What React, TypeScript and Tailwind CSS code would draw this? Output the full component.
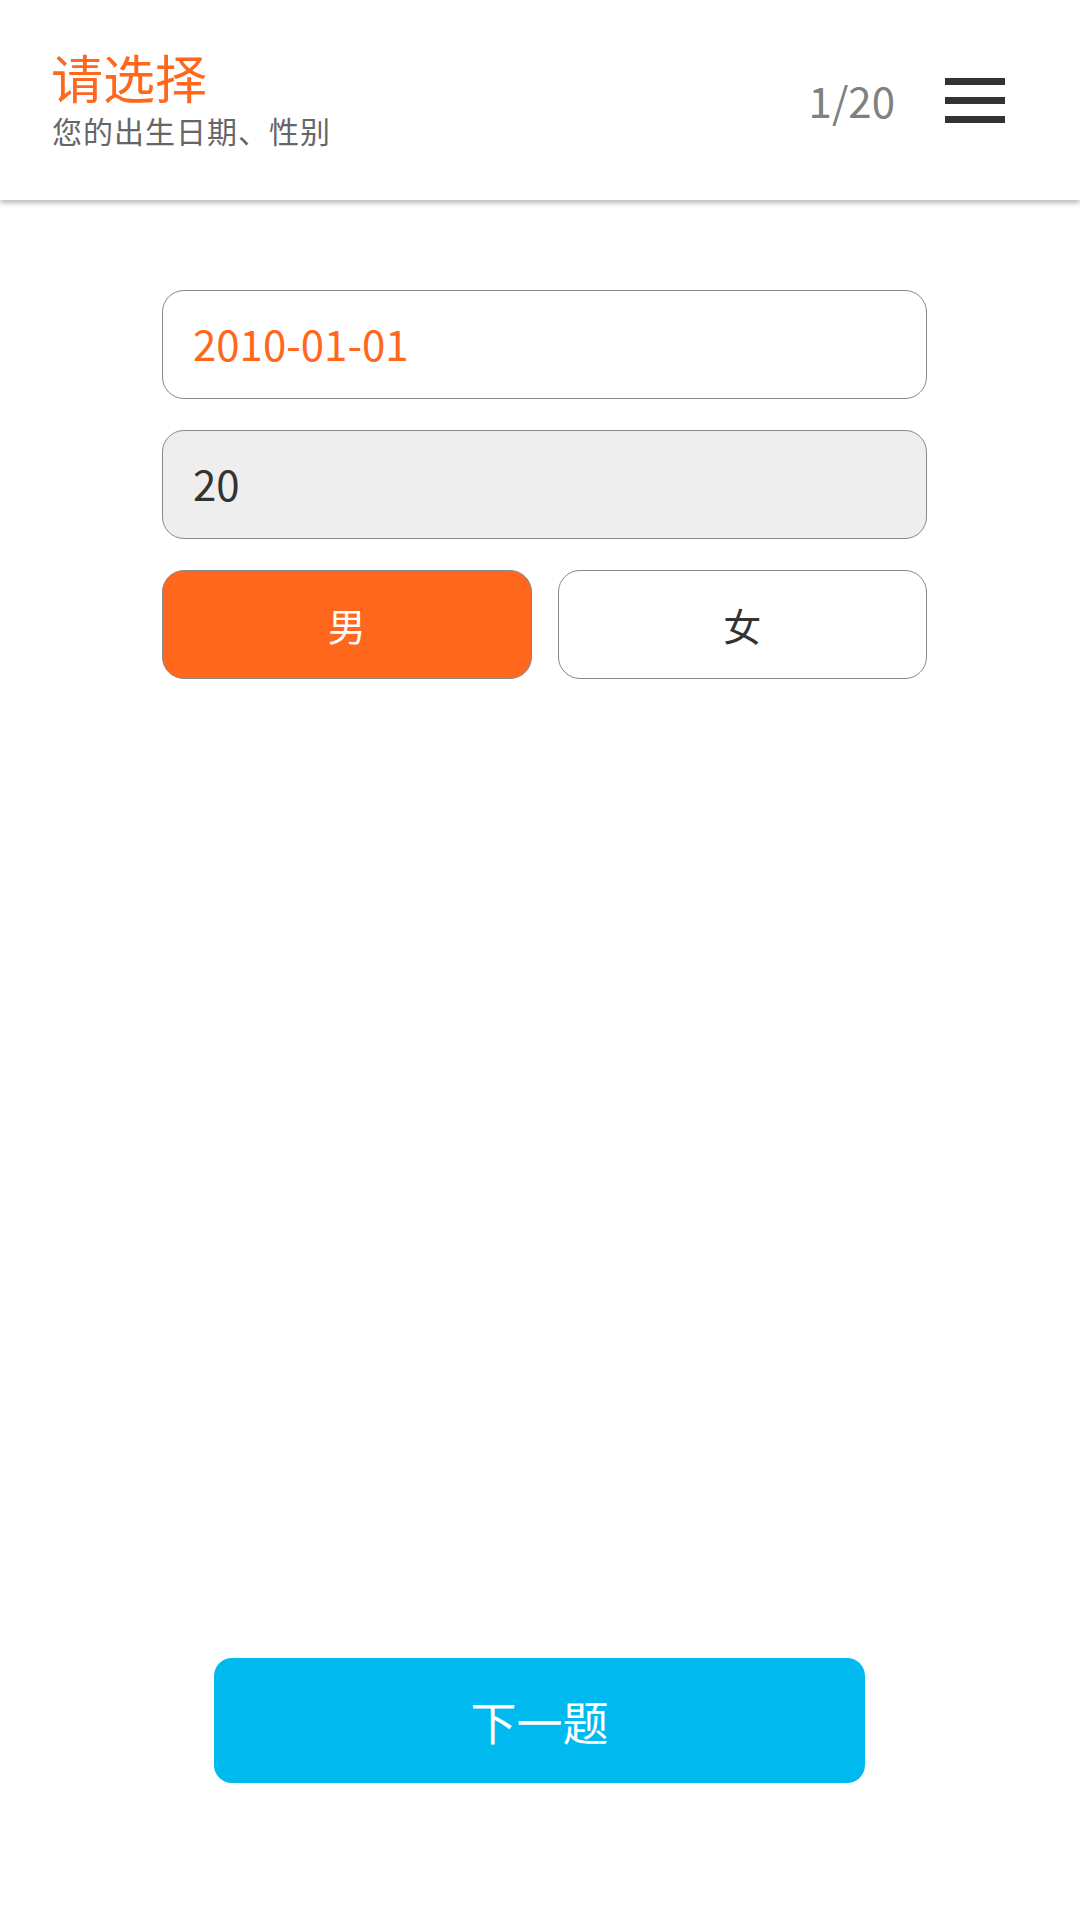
import React, { useState } from "react";

const ORANGE = "text-[#ff671d]";

function Header() {
	return (
		<header className="relative z-10 flex h-[200px] shrink-0 items-center justify-between bg-white pl-[51px] pr-[75px] shadow-[0_3px_5px_rgba(0,0,0,0.28)]">
			<div className="-mt-[4px] flex flex-col">
				<h1 className={`text-[52px] leading-[56px] ${ORANGE}`}>请选择</h1>
				<p className="mt-[8px] pl-[1px] text-[30px] leading-[34px] tracking-[1px] text-[#666666]">
					您的出生日期、性别
				</p>
			</div>
			<div className="flex items-center gap-[50px]">
				<span className="text-[42px] leading-none text-[#808080]">1/20</span>
				<button type="button" className="flex w-[60px] flex-col gap-[12px]" aria-label="menu">
					<span className="h-[7px] w-full bg-[#333333]" />
					<span className="h-[7px] w-full bg-[#333333]" />
					<span className="h-[7px] w-full bg-[#333333]" />
				</button>
			</div>
		</header>
	);
}

export default function App() {
	const [gender, setGender] = useState<"male" | "female">("male");

	return (
		<div className="flex h-[1920px] w-[1080px] flex-col overflow-hidden bg-white font-['Noto_Sans_CJK_SC','Noto_Sans',sans-serif]">
			<Header />

			<main className="ml-[162px] mt-[90px] flex w-[765px] flex-col gap-[31px]">
				<div className="flex h-[109px] items-center rounded-[22px] border border-[#888888] bg-white pl-[30px]">
					<span className={`-mt-[3px] text-[42px] leading-none ${ORANGE}`}>2010-01-01</span>
				</div>
				<div className="flex h-[109px] items-center rounded-[22px] border border-[#888888] bg-[#eeeeee] pl-[30px]">
					<span className="-mt-[3px] text-[42px] leading-none text-[#333333]">20</span>
				</div>
				<div className="grid grid-cols-2 gap-[26px]">
					<button
						type="button"
						onClick={() => setGender("male")}
						className={
							gender === "male"
								? "flex h-[109px] items-center justify-center rounded-[22px] border border-[#888888] bg-[#ff671d] text-[38px] text-white"
								: "flex h-[109px] items-center justify-center rounded-[22px] border border-[#888888] bg-white text-[38px] text-[#333333]"
						}
					>
						男
					</button>
					<button
						type="button"
						onClick={() => setGender("female")}
						className={
							gender === "female"
								? "flex h-[109px] items-center justify-center rounded-[22px] border border-[#888888] bg-[#ff671d] text-[38px] text-white"
								: "flex h-[109px] items-center justify-center rounded-[22px] border border-[#888888] bg-white text-[38px] text-[#333333]"
						}
					>
						女
					</button>
				</div>
			</main>

			<div className="mt-auto mb-[137px] ml-[214px] flex">
				<button
					type="button"
					className="flex h-[125px] w-[651px] items-center justify-center rounded-[18px] bg-[#00b9ef] text-[46px] text-white"
				>
					下一题
				</button>
			</div>
		</div>
	);
}
